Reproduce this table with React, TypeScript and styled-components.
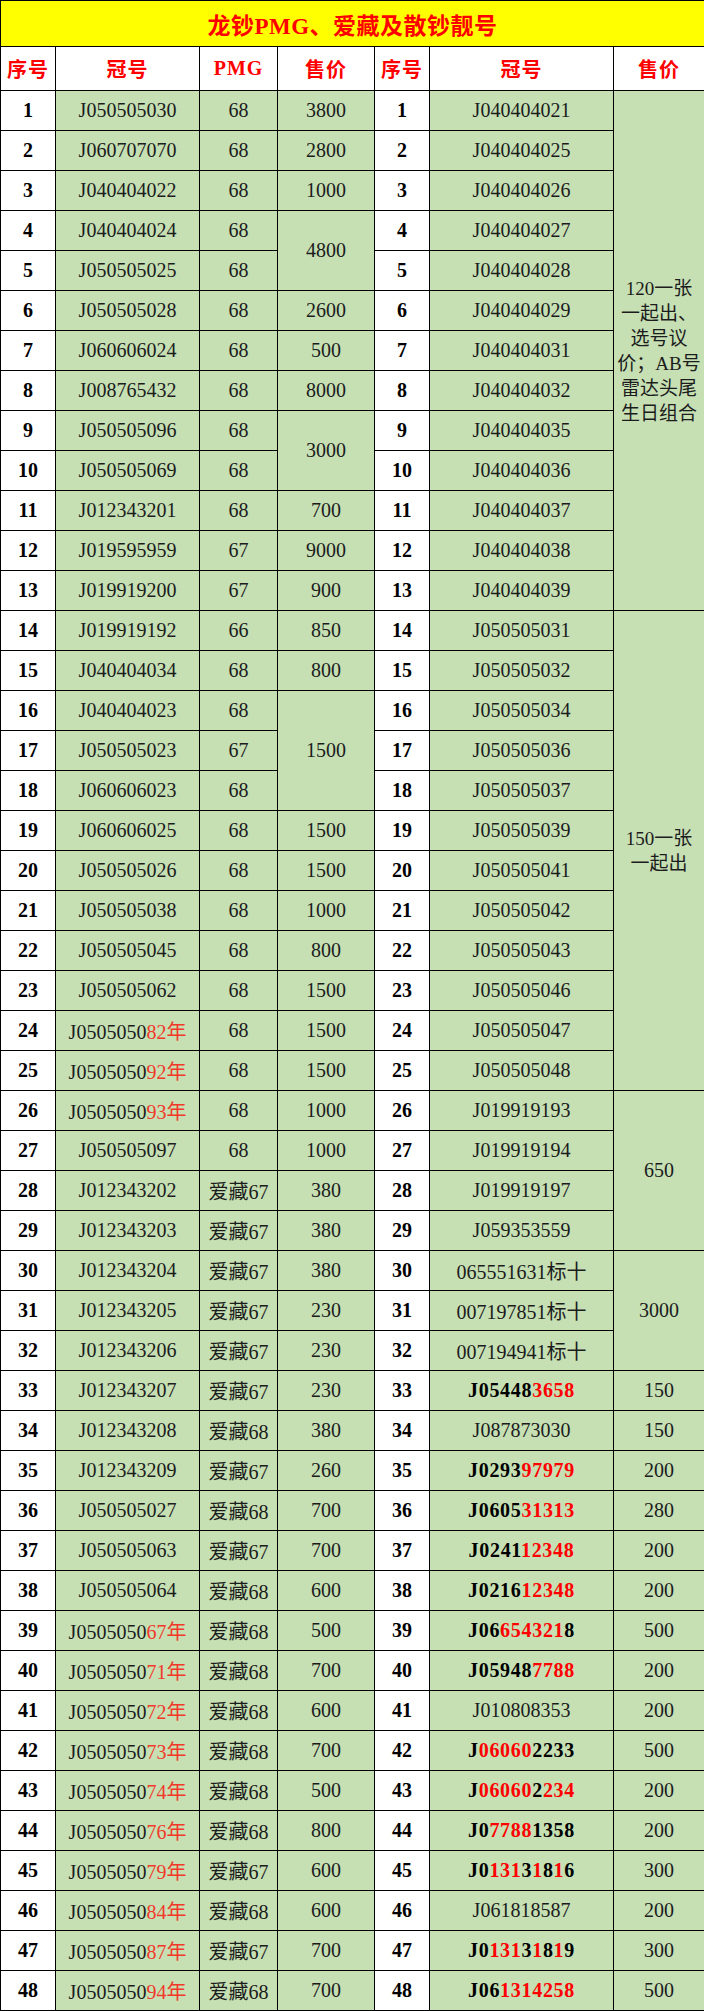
import { ReactElement, ReactNode } from 'react'
import styled, { createGlobalStyle } from 'styled-components'

const GREEN = '#c6e0b4'
const RED = '#ff0000'
const SOFT_RED = '#f0392b'
const FONT = '"Liberation Serif", "Noto Sans CJK SC", serif'

const GlobalStyle = createGlobalStyle`
  html, body {
    margin: 0;
    padding: 0;
    background: #fff;
  }
  body {
    font-family: ${FONT};
    color: #1c1c1c;
  }
`

const Sheet = styled.table`
  width: 704px;
  table-layout: fixed;
  border-collapse: collapse;
  font-family: ${FONT};
`

const TitleRow = styled.tr`
  height: 46px;
`

const Title = styled.th`
  background: #ffff00;
  color: ${RED};
  font-size: 23px;
  font-weight: 700;
  border: 1px solid #000;
  padding: 0;
  letter-spacing: 0.5px;
`

const HeadRow = styled.tr`
  height: 44px;
`

const HeadCell = styled.th`
  background: #fff;
  color: ${RED};
  font-size: 20px;
  font-weight: 600;
  border: 1px solid #000;
  padding: 0;
  letter-spacing: 1px;
`

const Row = styled.tr`
  height: 40px;
`

const Cell = styled.td<{ $green?: boolean; $bold?: boolean }>`
  background: ${({ $green }): string => ($green ? GREEN : '#fff')};
  font-weight: ${({ $bold }): number => ($bold ? 700 : 400)};
  color: ${({ $bold }): string => ($bold ? '#000' : '#1c1c1c')};
  letter-spacing: ${({ $bold, $green }): string => ($bold && $green ? '0.7px' : '0')};
  font-size: 20px;
  text-align: center;
  vertical-align: middle;
  border: 1px solid #000;
  padding: 0;
  white-space: nowrap;
`

const Note = styled.div`
  font-size: 19px;
  line-height: 25px;
  white-space: normal;
`

const Mark = styled.span<{ $soft?: boolean }>`
  color: ${({ $soft }): string => ($soft ? SOFT_RED : RED)};
`

// "J05448[3658]" -> brackets are red
const renderCode = (code: string, soft = false): ReactNode[] =>
  code
    .split(/(\[[^\]]+\])/)
    .filter(Boolean)
    .map((part, i) =>
      part.startsWith('[') ? (
        <Mark key={i} $soft={soft}>
          {part.slice(1, -1)}
        </Mark>
      ) : (
        <span key={i}>{part}</span>
      ),
    )

type LeftRow = { code: string; pmg: string; price?: string; span?: number }

const left: LeftRow[] = [
  { code: 'J050505030', pmg: '68', price: '3800' },
  { code: 'J060707070', pmg: '68', price: '2800' },
  { code: 'J040404022', pmg: '68', price: '1000' },
  { code: 'J040404024', pmg: '68', price: '4800', span: 2 },
  { code: 'J050505025', pmg: '68' },
  { code: 'J050505028', pmg: '68', price: '2600' },
  { code: 'J060606024', pmg: '68', price: '500' },
  { code: 'J008765432', pmg: '68', price: '8000' },
  { code: 'J050505096', pmg: '68', price: '3000', span: 2 },
  { code: 'J050505069', pmg: '68' },
  { code: 'J012343201', pmg: '68', price: '700' },
  { code: 'J019595959', pmg: '67', price: '9000' },
  { code: 'J019919200', pmg: '67', price: '900' },
  { code: 'J019919192', pmg: '66', price: '850' },
  { code: 'J040404034', pmg: '68', price: '800' },
  { code: 'J040404023', pmg: '68', price: '1500', span: 3 },
  { code: 'J050505023', pmg: '67' },
  { code: 'J060606023', pmg: '68' },
  { code: 'J060606025', pmg: '68', price: '1500' },
  { code: 'J050505026', pmg: '68', price: '1500' },
  { code: 'J050505038', pmg: '68', price: '1000' },
  { code: 'J050505045', pmg: '68', price: '800' },
  { code: 'J050505062', pmg: '68', price: '1500' },
  { code: 'J0505050[82年]', pmg: '68', price: '1500' },
  { code: 'J0505050[92年]', pmg: '68', price: '1500' },
  { code: 'J0505050[93年]', pmg: '68', price: '1000' },
  { code: 'J050505097', pmg: '68', price: '1000' },
  { code: 'J012343202', pmg: '爱藏67', price: '380' },
  { code: 'J012343203', pmg: '爱藏67', price: '380' },
  { code: 'J012343204', pmg: '爱藏67', price: '380' },
  { code: 'J012343205', pmg: '爱藏67', price: '230' },
  { code: 'J012343206', pmg: '爱藏67', price: '230' },
  { code: 'J012343207', pmg: '爱藏67', price: '230' },
  { code: 'J012343208', pmg: '爱藏68', price: '380' },
  { code: 'J012343209', pmg: '爱藏67', price: '260' },
  { code: 'J050505027', pmg: '爱藏68', price: '700' },
  { code: 'J050505063', pmg: '爱藏67', price: '700' },
  { code: 'J050505064', pmg: '爱藏68', price: '600' },
  { code: 'J0505050[67年]', pmg: '爱藏68', price: '500' },
  { code: 'J0505050[71年]', pmg: '爱藏68', price: '700' },
  { code: 'J0505050[72年]', pmg: '爱藏68', price: '600' },
  { code: 'J0505050[73年]', pmg: '爱藏68', price: '700' },
  { code: 'J0505050[74年]', pmg: '爱藏68', price: '500' },
  { code: 'J0505050[76年]', pmg: '爱藏68', price: '800' },
  { code: 'J0505050[79年]', pmg: '爱藏67', price: '600' },
  { code: 'J0505050[84年]', pmg: '爱藏68', price: '600' },
  { code: 'J0505050[87年]', pmg: '爱藏67', price: '700' },
  { code: 'J0505050[94年]', pmg: '爱藏68', price: '700' },
]

type RightRow = { code: string; bold?: boolean }

const right: RightRow[] = [
  ...[
    'J040404021', 'J040404025', 'J040404026', 'J040404027', 'J040404028',
    'J040404029', 'J040404031', 'J040404032', 'J040404035', 'J040404036',
    'J040404037', 'J040404038', 'J040404039', 'J050505031', 'J050505032',
    'J050505034', 'J050505036', 'J050505037', 'J050505039', 'J050505041',
    'J050505042', 'J050505043', 'J050505046', 'J050505047', 'J050505048',
    'J019919193', 'J019919194', 'J019919197', 'J059353559', '065551631标十',
    '007197851标十', '007194941标十',
  ].map((code) => ({ code })),
  { code: 'J05448[3658]', bold: true },
  { code: 'J087873030' },
  { code: 'J0293[97979]', bold: true },
  { code: 'J0605[31313]', bold: true },
  { code: 'J0241[12348]', bold: true },
  { code: 'J0216[12348]', bold: true },
  { code: 'J06[654321]8', bold: true },
  { code: 'J05948[7788]', bold: true },
  { code: 'J010808353' },
  { code: 'J[06060]2233', bold: true },
  { code: 'J[06060]2[234]', bold: true },
  { code: 'J0[7788]1358', bold: true },
  { code: 'J0[131]3[1]8[1]6', bold: true },
  { code: 'J061818587' },
  { code: 'J0[131]3[1]8[1]9', bold: true },
  { code: 'J06[1314258]', bold: true },
]

type PriceBlock = { span: number; content: ReactNode }

const rightPrices: Record<number, PriceBlock> = {
  0: {
    span: 13,
    content: (
      <Note>
        120一张
        <br />
        一起出、
        <br />
        选号议
        <br />
        价；AB号
        <br />
        雷达头尾
        <br />
        生日组合
      </Note>
    ),
  },
  13: {
    span: 12,
    content: (
      <Note>
        150一张
        <br />
        一起出
      </Note>
    ),
  },
  25: { span: 4, content: '650' },
  29: { span: 3, content: '3000' },
}

;['150', '150', '200', '280', '200', '200', '500', '200', '200', '500', '200', '200', '300', '200', '300', '500'].forEach(
  (price, i) => {
    rightPrices[32 + i] = { span: 1, content: price }
  },
)

const widths = [55, 144, 78, 97, 55, 184, 91]

const App = (): ReactElement => {
  return (
    <>
      <GlobalStyle />
      <Sheet>
        <colgroup>
          {widths.map((w, i) => (
            <col key={i} style={{ width: w }} />
          ))}
        </colgroup>
        <thead>
          <TitleRow>
            <Title colSpan={7}>龙钞PMG、爱藏及散钞靓号</Title>
          </TitleRow>
          <HeadRow>
            <HeadCell>序号</HeadCell>
            <HeadCell>冠号</HeadCell>
            <HeadCell>PMG</HeadCell>
            <HeadCell>售价</HeadCell>
            <HeadCell>序号</HeadCell>
            <HeadCell>冠号</HeadCell>
            <HeadCell>售价</HeadCell>
          </HeadRow>
        </thead>
        <tbody>
          {left.map((row, i) => {
            const r = right[i]
            const rp = rightPrices[i]
            return (
              <Row key={i}>
                <Cell $bold>{i + 1}</Cell>
                <Cell $green>{renderCode(row.code, true)}</Cell>
                <Cell $green>{row.pmg}</Cell>
                {row.price && (
                  <Cell $green rowSpan={row.span ?? 1}>
                    {row.price}
                  </Cell>
                )}
                <Cell $bold>{i + 1}</Cell>
                <Cell $green $bold={r.bold}>
                  {renderCode(r.code)}
                </Cell>
                {rp && (
                  <Cell $green rowSpan={rp.span}>
                    {rp.content}
                  </Cell>
                )}
              </Row>
            )
          })}
        </tbody>
      </Sheet>
    </>
  )
}

export default App
